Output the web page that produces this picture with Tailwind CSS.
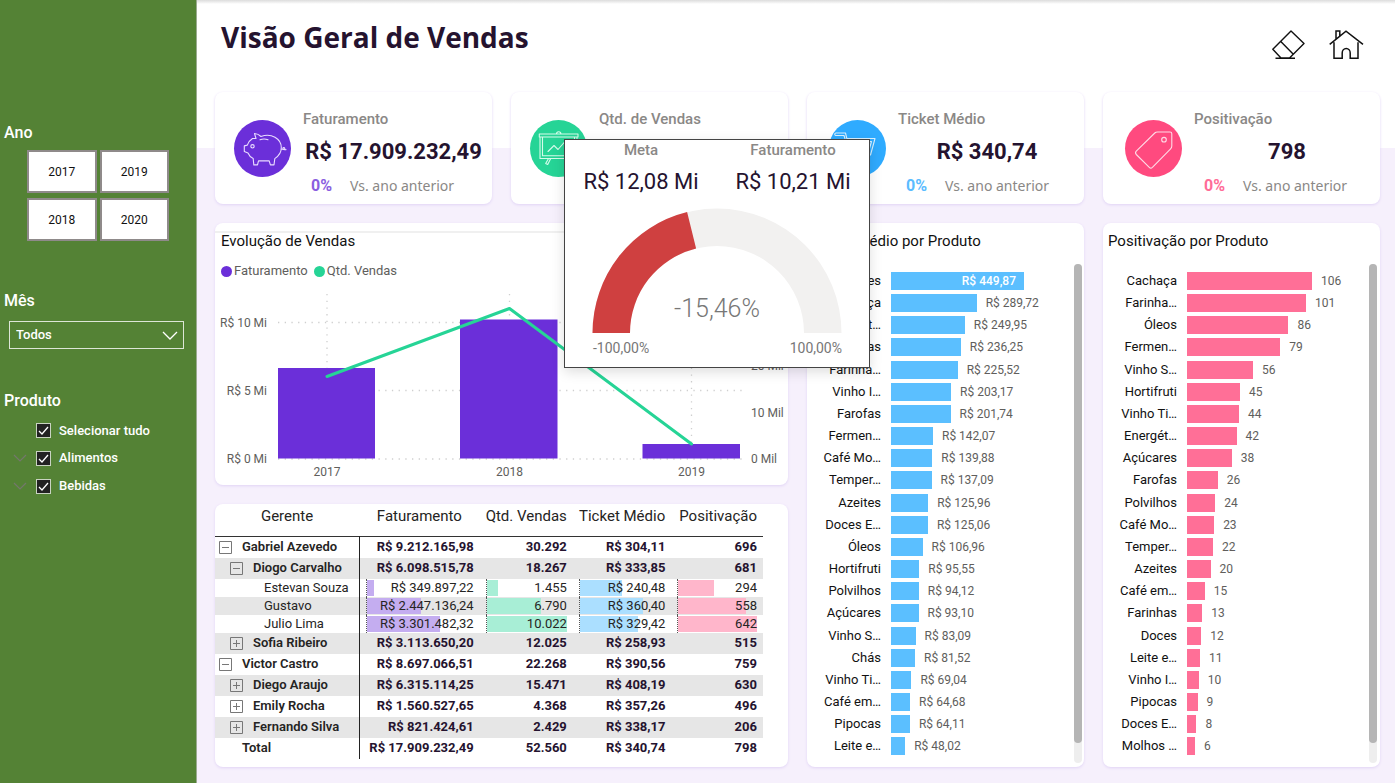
<!DOCTYPE html>
<html lang="pt-BR">
<head>
<meta charset="utf-8">
<meta name="viewport" content="width=device-width, initial-scale=1">
<title>Visão Geral de Vendas</title>
<script src="https://cdn.jsdelivr.net/npm/@tailwindcss/browser@4"></script>
</head>
<body class="min-h-screen bg-[#f6f0fc] font-[Roboto,'Liberation_Sans',sans-serif] text-[#252423]">
<div class="flex min-h-screen">

  <!-- Filters -->
  <aside class="w-[197px] shrink-0 border-r border-[#9bab90] bg-[#548235] pt-[121px] text-white">
    <section aria-labelledby="ano">
      <h2 id="ano" class="pl-1 text-base leading-6 font-medium">Ano</h2>
      <div class="mt-[5px] ml-[27px] grid w-[142px] grid-cols-2 gap-x-[3px] gap-y-[5px] text-[12px] text-[#111]">
        <button class="h-[43px] border-2 border-[#8f8a8a] bg-white">2017</button>
        <button class="h-[43px] border-2 border-[#8f8a8a] bg-white">2019</button>
        <button class="h-[43px] border-2 border-[#8f8a8a] bg-white">2018</button>
        <button class="h-[43px] border-2 border-[#8f8a8a] bg-white">2020</button>
      </div>
    </section>
    <section class="mt-12">
      <label for="mes" class="block pl-1 text-base leading-6 font-medium">Mês</label>
      <div class="relative mt-2 mr-3 ml-[9px]">
        <select id="mes" class="h-7 w-full appearance-none border border-white/80 bg-transparent px-1.5 text-[13px] font-medium">
          <option>Todos</option>
        </select>
        <svg class="pointer-events-none absolute top-2.5 right-1.5 h-2.5 w-4" viewBox="0 0 16 10" fill="none" stroke="white" stroke-width="1.3"><path d="M1 1l7 7 7-7"/></svg>
      </div>
    </section>
    <section class="mt-10">
      <h2 class="pl-1 text-base leading-6 font-medium">Produto</h2>
      <ul class="mt-1 text-[13px] font-medium">
        <li class="flex h-[27px] items-center pl-[13px]">
          <span class="w-[23px]"></span>
          <label class="relative flex items-center gap-2"><input type="checkbox" checked class="size-[15px] appearance-none border border-[#c9d3c2] bg-[#222]"><svg class="absolute left-0.5 size-[11px]" viewBox="0 0 11 11" fill="none" stroke="white" stroke-width="1.3"><path d="M1 6l3 3 6-7"/></svg>Selecionar tudo</label>
        </li>
        <li class="flex h-7 items-center pl-[13px]">
          <button class="w-[23px]" aria-label="Expandir Alimentos"><svg class="block h-2 w-3.5" viewBox="0 0 14 8" fill="none" stroke="#74776c" stroke-width="1.200"><path d="M1 1l6 6 6-6"/></svg></button>
          <label class="relative flex items-center gap-2"><input type="checkbox" checked class="size-[15px] appearance-none border border-[#c9d3c2] bg-[#222]"><svg class="absolute left-0.5 size-[11px]" viewBox="0 0 11 11" fill="none" stroke="white" stroke-width="1.3"><path d="M1 6l3 3 6-7"/></svg>Alimentos</label>
        </li>
        <li class="flex h-7 items-center pl-[13px]">
          <button class="w-[23px]" aria-label="Expandir Bebidas"><svg class="block h-2 w-3.5" viewBox="0 0 14 8" fill="none" stroke="#74776c" stroke-width="1.200"><path d="M1 1l6 6 6-6"/></svg></button>
          <label class="relative flex items-center gap-2"><input type="checkbox" checked class="size-[15px] appearance-none border border-[#c9d3c2] bg-[#222]"><svg class="absolute left-0.5 size-[11px]" viewBox="0 0 11 11" fill="none" stroke="white" stroke-width="1.3"><path d="M1 6l3 3 6-7"/></svg>Bebidas</label>
        </li>
      </ul>
    </section>
  </aside>

  <main class="relative min-w-0 flex-1 bg-linear-to-b from-white from-[148px] to-[#f6f0fc] to-[148px] pr-[15px] pb-4 pl-[18px]">
    <div class="absolute inset-x-0 top-0 h-1 bg-linear-to-b from-[#dcdcdc] to-white"></div>

    <header class="flex h-[92px] items-start justify-between pr-4 pl-1.5">
      <h1 class="pt-4 font-['Open_Sans','Noto_Sans',sans-serif] text-[28px] leading-[42px] font-bold text-[#25132f]">Visão Geral de Vendas</h1>
      <nav class="flex gap-6 pt-[30px]">
        <a href="#limpar" aria-label="Limpar filtros"><svg class="h-[30px] w-[33px]" viewBox="0 0 33 30" fill="none" stroke="#111" stroke-width="1.4" stroke-linejoin="round"><path d="M19 1L32 13.400L17.500 28H9L.8 19.300zM8.800 11.500L21.300 24.300M3.500 28.200H23"/></svg></a>
        <a href="#inicio" aria-label="Início"><svg class="h-[30px] w-[35px]" viewBox="0 0 35 30" fill="none" stroke="#111" stroke-width="1.500"><path d="M.7 14.300L17 1.200l17 13.100M7 9V1h3.800v5M5 12.300V28.200h8.200V23a4 4.500 0 018 0v5.200H29V12.300"/></svg></a>
      </nav>
    </header>

    <div class="grid grid-cols-4 gap-[19px]">
      <!-- Indicators -->
      <article class="flex gap-3 rounded-lg bg-white pt-[15px] pr-2 pb-1.5 pl-[19px] shadow-[0_1px_3px_#e0d3f5]">
        <svg class="mt-[13px] size-[57px] shrink-0 rounded-full bg-[#6b2fd9]" viewBox="0 0 57 57" fill="none" stroke="#e9dcff" stroke-width="1.100" stroke-linejoin="round" stroke-linecap="round"><path d="M22 18.500L20.500 13.500c3 .2 5 1.500 6.500 3 4-1.500 10-1.500 14 .8 4 2.300 6.300 6 6.300 10.300 0 4.700-2.600 8.600-6.500 11l-.8 6.300h-3.600l-1.200-4H24.500l-1 4h-3.700l-.6-6.300c-2.500-1.300-4.200-3-5.200-5.600l-3.700-1.500v-5.600l3-.8c1-3 2.700-5 5.200-6.600zM26 19.800q4-1.600 8 0M47.200 29c3 1.200 4.500-.5 3-1.400-1.700-.8-2 2.700 1.800 2"/><circle cx="18.500" cy="26.300" r="1.700"/></svg>
        <div class="flex-1">
          <h2 class="text-[15px] leading-6 font-medium text-[#8a8886]">Faturamento</h2>
          <p class="mt-[3px] text-center text-[22px] leading-9 font-bold whitespace-nowrap text-[#25132f]">R$ 17.909.232,49</p>
          <p class="mt-1 flex gap-[18px] pl-2 leading-6 text-[#8a8886]"><span class="text-base font-bold text-[#8a5ee0]">0%</span><span class="font-['Noto_Sans',sans-serif] text-[14px]">Vs. ano anterior</span></p>
        </div>
      </article>
      <article class="flex gap-3 rounded-lg bg-white pt-[15px] pr-2 pb-1.5 pl-[19px] shadow-[0_1px_3px_#e0d3f5]">
        <svg class="mt-[13px] size-[57px] shrink-0 rounded-full bg-[#26d496]" viewBox="0 0 57 57" fill="none" stroke="#d5fbea" stroke-width="1.100" stroke-linejoin="round" stroke-linecap="round"><path d="M9.300 14H48v3H9.300zM10 17v21.500h37V17M12.500 17v18.700h32V17M26.500 14a2.200 2.200 0 014.400 0M18 31.500l6-6 4 4 7-8 4 4M18.500 38.500L15.700 43.500l2 1 3-6M38 38.500l2.800 6 2-1-2.800-5"/></svg>
        <div class="flex-1">
          <h2 class="text-[15px] leading-6 font-medium text-[#8a8886]">Qtd. de Vendas</h2>
          <p class="mt-[3px] text-center text-[22px] leading-9 font-bold whitespace-nowrap text-[#25132f]">52.560</p>
          <p class="mt-1 flex gap-[18px] pl-2 leading-6 text-[#8a8886]"><span class="text-base font-bold text-[#26d496]">0%</span><span class="font-['Noto_Sans',sans-serif] text-[14px]">Vs. ano anterior</span></p>
        </div>
      </article>
      <article class="flex gap-3 rounded-lg bg-white pt-[15px] pr-2 pb-1.5 pl-[22px] shadow-[0_1px_3px_#e0d3f5]">
        <svg class="mt-[13px] size-[57px] shrink-0 rounded-full bg-[#2fabff]" viewBox="0 0 57 57" fill="none" stroke="#d9f0ff" stroke-width="1.100" stroke-linejoin="round" stroke-linecap="round"><path d="M7 13h9.500l1.300 5.500H46L41.500 35H21L15 15.500H7a1.200 1.200 0 010-2.500zM19 21.500h23.500L39.500 32H22z"/><circle cx="24" cy="41" r="2.500"/><circle cx="38" cy="41" r="2.500"/></svg>
        <div class="flex-1">
          <h2 class="text-[15px] leading-6 font-medium text-[#8a8886]">Ticket Médio</h2>
          <p class="mt-[3px] text-center text-[22px] leading-9 font-bold whitespace-nowrap text-[#25132f]">R$ 340,74</p>
          <p class="mt-1 flex gap-[18px] pl-2 leading-6 text-[#8a8886]"><span class="text-base font-bold text-[#5bbcff]">0%</span><span class="font-['Noto_Sans',sans-serif] text-[14px]">Vs. ano anterior</span></p>
        </div>
      </article>
      <article class="flex gap-3 rounded-lg bg-white pt-[15px] pr-0 pb-1.5 pl-[22px] shadow-[0_1px_3px_#e0d3f5]">
        <svg class="mt-[13px] size-[57px] shrink-0 rounded-full bg-[#ff4a7f]" viewBox="0 0 57 57" fill="none" stroke="#ffdbe6" stroke-width="1.100" stroke-linejoin="round"><path d="M32.500 12H45a1.800 1.800 0 011.800 1.800V26q0 1.700-1.200 2.900L27.400 47.300q-1.600 1.500-3.100 0L11.300 34.500q-1.600-1.700 0-3.300L29.800 13q1-1 2.700-1z"/><circle cx="39" cy="19.700" r="2.300"/></svg>
        <div class="flex-1">
          <h2 class="text-[15px] leading-6 font-medium text-[#8a8886]">Positivação</h2>
          <p class="mt-[3px] text-center text-[22px] leading-9 font-bold whitespace-nowrap text-[#25132f]">798</p>
          <p class="mt-1 flex gap-[18px] pl-2.5 leading-6 text-[#8a8886]"><span class="text-base font-bold text-[#ff6c97]">0%</span><span class="font-['Noto_Sans',sans-serif] text-[14px]">Vs. ano anterior</span></p>
        </div>
      </article>

      <div class="col-span-2 flex flex-col gap-[19px]">
        <!-- Sales trend -->
        <section class="rounded-lg bg-white pt-2 shadow-[0_1px_3px_#e0d3f5]">
          <div class="border-t-2 border-[#f0f0f0] px-1.5 pb-0.5">
            <h2 class="text-[15px] leading-4 text-[#111]">Evolução de Vendas</h2>
            <ul class="mt-2.5 flex h-6 items-center gap-1.5 text-[13px] text-[#605e5c]">
              <li class="flex items-center gap-0.5"><span class="size-[11px] rounded-full bg-[#6b2fd9]"></span>Faturamento</li>
              <li class="flex items-center gap-0.5"><span class="size-[11px] rounded-full bg-[#26d496]"></span>Qtd. Vendas</li>
            </ul>
          </div>
          <svg class="block h-auto w-full" viewBox="0 0 573 200" font-size="12" fill="#605e5c">
            <g stroke="#cfcfcf" stroke-width="1.300" stroke-dasharray="1.300 5.400">
              <path d="M63 37.500H527M63 105.500H527M63 174H527M112 9V174M294.500 9V174M476.500 9V174"/>
            </g>
            <g fill="#6b2fd9"><path d="M63 83h97v90.500H63zM245 34.500h97.500v139H245zM427.500 159H525v14.500h-97.500z"/></g>
            <path d="M112 91.500L294.500 23.500L476.500 159" fill="none" stroke="#26d496" stroke-width="3" stroke-linecap="round" stroke-linejoin="round"/>
            <g text-anchor="end"><text x="52" y="42">R$ 10 Mi</text><text x="52" y="110">R$ 5 Mi</text><text x="52" y="178">R$ 0 Mi</text></g>
            <g><text x="536" y="85">20 Mil</text><text x="536" y="132">10 Mil</text><text x="536" y="178">0 Mil</text></g>
            <g text-anchor="middle"><text x="112" y="191">2017</text><text x="294.500" y="191">2018</text><text x="476.500" y="191">2019</text></g>
          </svg>
        </section>

        <!-- Managers -->
        <section class="rounded-lg bg-white pr-[25px] pb-2 shadow-[0_1px_3px_#e0d3f5]">
          <table class="w-full table-fixed border-collapse">
            <colgroup><col class="w-[26.3%]"><col class="w-[22%]"><col class="w-[17%]"><col class="w-[18%]"><col class="w-[16.7%]"></colgroup>
            <thead>
              <tr class="h-8 border-b border-[#333] text-[15px] leading-6 whitespace-nowrap">
                <th scope="col" class="pb-2 font-normal">Gerente</th><th scope="col" class="px-1.5 pb-2 text-center font-normal">Faturamento</th><th scope="col" class="pb-2 text-center font-normal">Qtd. Vendas</th><th scope="col" class="pb-2 text-center font-normal">Ticket Médio</th><th scope="col" class="pr-1.5 pb-2 text-right font-normal">Positivação</th>
              </tr>
            </thead>
            <tbody id="gerentes"></tbody>
          </table>
        </section>
      </div>

      <!-- Products -->
      <section class="flex flex-col rounded-lg bg-white pb-1 shadow-[0_1px_3px_#e0d3f5]">
        <h2 class="h-[41px] pt-2 pl-[5px] text-[15px] leading-5 text-[#111]">Ticket Médio por Produto</h2>
        <div class="flex flex-1 pr-[2px]">
          <ul id="ticket" class="flex min-w-0 flex-1 flex-col justify-between pt-2 pb-[7px]"></ul>
          <div class="w-2 rounded-full bg-[#eee]"><div class="h-[96%] rounded-full bg-[#b5b5b5]"></div></div>
        </div>
      </section>
      <section class="flex flex-col rounded-lg bg-white pb-1 shadow-[0_1px_3px_#e0d3f5]">
        <h2 class="h-[41px] pt-2 pl-[5px] text-[15px] leading-5 text-[#111]">Positivação por Produto</h2>
        <div class="flex flex-1 pr-[3px]">
          <ul id="positivacao" class="flex min-w-0 flex-1 flex-col justify-between pt-2 pb-[7px]"></ul>
          <div class="w-2 rounded-full bg-[#eee]"><div class="h-[96%] rounded-full bg-[#b5b5b5]"></div></div>
        </div>
      </section>
    </div>

    <!-- Target tooltip -->
    <div role="tooltip" class="absolute top-[139px] left-[367px] w-[306px] border border-[#444] bg-white pb-2 shadow-[0_4px_12px_#0002]">
      <dl class="grid grid-cols-2 text-center">
        <div><dt class="text-[15px] leading-5 font-medium text-[#8a8886]">Meta</dt><dd class="mt-1 text-[22px] leading-9 text-[#25132f]">R$ 12,08 Mi</dd></div>
        <div><dt class="text-[15px] leading-5 font-medium text-[#8a8886]">Faturamento</dt><dd class="mt-1 text-[22px] leading-9 text-[#25132f]">R$ 10,21 Mi</dd></div>
      </dl>
      <svg class="block w-full" viewBox="0 0 304 159" fill="#777">
        <path d="M27.500 133a124.500 124.500 0 01249 0H239a87 87 0 00-174 0z" fill="#f2f1f0"/>
        <path d="M27.500 133A124.500 124.500 0 01122.100 12.100L131.100 48.500A87 87 0 0065 133z" fill="#cf4040"/>
        <text x="152" y="117" text-anchor="middle" font-size="25" font-weight="300">-15,46%</text>
        <text x="28" y="153" font-size="14">-100,00%</text>
        <text x="277" y="153" font-size="14" text-anchor="end">100,00%</text>
      </svg>
    </div>
  </main>
</div>

<script>
const ticket = [['Licores',449.87],['Cachaça',289.72],['Energét...',249.95],['Farinhas',236.25],['Farinha...',225.52],['Vinho I...',203.17],['Farofas',201.74],['Fermen...',142.07],['Café Mo...',139.88],['Temper...',137.09],['Azeites',125.96],['Doces E...',125.06],['Óleos',106.96],['Hortifruti',95.55],['Polvilhos',94.12],['Açúcares',93.10],['Vinho S...',83.09],['Chás',81.52],['Vinho Ti...',69.04],['Café em...',64.68],['Pipocas',64.11],['Leite e...',48.02]];
const posit = [['Cachaça',106],['Farinha...',101],['Óleos',86],['Fermen...',79],['Vinho S...',56],['Hortifruti',45],['Vinho Ti...',44],['Energét...',42],['Açúcares',38],['Farofas',26],['Polvilhos',24],['Café Mo...',23],['Temper...',22],['Azeites',20],['Café em...',15],['Farinhas',13],['Doces',12],['Leite e...',11],['Vinho I...',10],['Pipocas',9],['Doces E...',8],['Molhos ...',6]];

const barRow = (name, pct, text, color, inside) => `
  <li class="flex h-[18px] items-center text-[13px] leading-[18px] whitespace-nowrap">
    <span class="mr-2.5 w-[74px] shrink-0 text-right text-[#111]">${name.replace('...', '…')}</span>
    <span class="flex min-w-0 flex-1 items-center gap-[9px]">
      <span class="h-[18px] shrink-0 pr-2 text-right text-[12px] font-medium text-white ${color}" style="width:${pct}%">${inside ? text : ''}</span>
      ${inside ? '' : `<span class="text-[12px] text-[#605e5c]">${text}</span>`}
    </span>
  </li>`;
document.getElementById('ticket').innerHTML = ticket.map(([n, v], i) =>
  barRow(n, v * 0.1615, 'R$ ' + v.toFixed(2).replace('.', ','), 'bg-[#5bbfff]', i === 0)).join('');
document.getElementById('positivacao').innerHTML = posit.map(([n, v]) =>
  barRow(n, v * 0.648, v, 'bg-[#ff6f97]', false)).join('');

// level, sign, name, values, data-bar percentages
const managers = [
  [0,'-','Gabriel Azevedo',['R$ 9.212.165,98','30.292','R$ 304,11','696']],
  [1,'-','Diogo Carvalho',['R$ 6.098.515,78','18.267','R$ 333,85','681']],
  [2,'','Estevan Souza',['R$ 349.897,22','1.455','R$ 240,48','294'],[6.5,14.5,49,45]],
  [2,'','Gustavo',['R$ 2.447.136,24','6.790','R$ 360,40','558'],[51,68,74,86]],
  [2,'','Julio Lima',['R$ 3.301.482,32','10.022','R$ 329,42','642'],[69,100,68,100]],
  [1,'+','Sofia Ribeiro',['R$ 3.113.650,20','12.025','R$ 258,93','515']],
  [0,'-','Victor Castro',['R$ 8.697.066,51','22.268','R$ 390,56','759']],
  [1,'+','Diego Araujo',['R$ 6.315.114,25','15.471','R$ 408,19','630']],
  [1,'+','Emily Rocha',['R$ 1.560.527,65','4.368','R$ 357,26','496']],
  [1,'+','Fernando Silva',['R$ 821.424,61','2.429','R$ 338,17','206']],
  [0,'','Total',['R$ 17.909.232,49','52.560','R$ 340,74','798']],
];
const barColors = ['bg-[#c4adf0]','bg-[#a8eed6]','bg-[#abdfff]','bg-[#ffb6cb]'];
const indent = ['pl-1','pl-[15px]','pl-[26px]'];
const toggle = sign => sign
  ? `<button class="mr-2.5 size-[13px] shrink-0" aria-label="${sign === '+' ? 'Expandir' : 'Recolher'}"><svg class="block" viewBox="0 0 13 13" fill="none" stroke="#777"><path d="M.5.500h12v12H.5zM3 6.500h7${sign === '+' ? 'M6.500 3v7' : ''}"/></svg></button>`
  : '<span class="mr-2.5 w-[13px] shrink-0"></span>';
document.getElementById('gerentes').innerHTML = managers.map(([lvl, sign, name, vals, bars], r) => `
  <tr class="${r % 2 ? 'bg-[#e6e6e6]' : ''} text-[13px] leading-[18px] ${bars ? 'h-[18px]' : 'h-[21px] font-bold'}">
    <th scope="row" class="border-r border-[#222] p-0 ${bars ? 'font-normal' : 'font-semibold'}"><span class="flex items-center whitespace-nowrap ${indent[lvl]}">${toggle(sign)}${name}</span></th>
    ${vals.map((v, c) => `<td class="px-1.5 py-0 text-right whitespace-nowrap ${bars ? '' : 'text-[#25132f]'}">${bars
      ? `<div class="relative h-[18px] border-l border-dotted border-[#555] leading-[18px]"><div class="absolute inset-y-px left-0 ${barColors[c]}" style="width:${bars[c]}%"></div><span class="relative">${v}</span></div>`
      : v}</td>`).join('')}
  </tr>`).join('');
</script>
</body>
</html>
